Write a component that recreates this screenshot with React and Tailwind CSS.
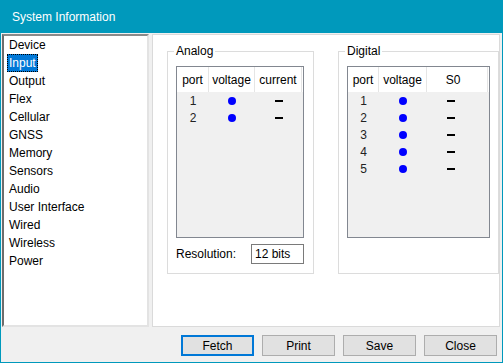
import { useState } from "react";

const navItems = ["Device", "Input", "Output", "Flex", "Cellular", "GNSS", "Memory", "Sensors", "Audio", "User Interface", "Wired", "Wireless", "Power"];

function Dot() {
  return <div className="w-[8px] h-[8px] rounded-full bg-[#0000ff]" />;
}

function Dash() {
  return <div className="w-[8px] h-[2px] bg-black" />;
}

function PortTable({ cols, lastLabel, rows, className }) {
  return (
    <div className={`border border-[#828790] bg-[#f0f0f0] h-[172px] ${className}`}>
      <div className="flex h-[25px] bg-white">
        <div className={`${cols[0]} border-r border-[#e5e5e5] flex items-center justify-center`}>port</div>
        <div className={`${cols[1]} border-r border-[#e5e5e5] flex items-center justify-center`}>voltage</div>
        <div className={`${cols[2]} border-r border-[#e5e5e5] flex items-center justify-center ${lastLabel === "S0" ? "pr-[8px]" : ""}`}>{lastLabel}</div>
      </div>
      {rows.map(n => (
        <div key={n} className="flex h-[17px] items-center">
          <div className={`${cols[0]} flex justify-center text-[#222]`}>{n}</div>
          <div className={`${cols[1]} flex justify-center`}><Dot /></div>
          <div className={`${cols[2]} flex justify-center ${lastLabel === "S0" ? "pr-[14px]" : ""}`}><Dash /></div>
        </div>
      ))}
    </div>
  );
}

export default function App() {
  const [selected, setSelected] = useState("Input");

  return (
    <div className="w-[503px] h-[363px] bg-[#0099bc] flex flex-col font-['Liberation_Sans',Arial,sans-serif] text-[12px] text-black">
      <div className="h-[33px] shrink-0 flex items-center pl-[12px] pt-px text-white">System Information</div>

      <div className="flex-1 mx-px mb-px bg-[#f0f0f0] flex flex-col">
        <div className="flex pt-px h-[294px]">
          {/* nav list */}
          <div className="ml-px w-[147px] h-[293px] bg-white border-2 border-t-[#8a8a8a] border-l-[#6d6d6d] border-r-[#e3e3e3] border-b-[#e3e3e3] pl-[3px]">
            {navItems.map(item => (
              <div key={item} className="h-[18px]">
                <span
                  onClick={() => setSelected(item)}
                  className={`inline-block h-[18px] leading-[19px] px-[2px] ${selected === item ? "bg-[#0078d7] text-white outline-1 outline-dotted outline-black -outline-offset-1" : ""}`}
                >
                  {item}
                </span>
              </div>
            ))}
          </div>

          {/* detail panel */}
          <div className="ml-[3px] w-[348px] h-[293px] bg-white border border-[#dadada] pl-[14px] pt-[9px] flex gap-[24px]">
            <fieldset className="w-[147px] h-[230px] border border-[#dcdcdc] pl-[8px]">
              <legend className="-ml-[2px] px-[2px] leading-[15px]">Analog</legend>
              <PortTable cols={["w-[32px]", "w-[46px]", "w-[47px]"]} lastLabel="current" rows={[1, 2]} className="mt-[7px] w-[128px]" />
              <div className="flex items-center mt-[6px] h-[20px]">
                <span className="w-[75px]">Resolution:</span>
                <div className="w-[53px] h-[20px] border border-[#7a7a7a] bg-white flex items-center pl-[3px]">12 bits</div>
              </div>
            </fieldset>

            <fieldset className="w-[161px] h-[230px] border border-[#dcdcdc] pl-[8px]">
              <legend className="-ml-[2px] px-[2px] leading-[15px]">Digital</legend>
              <PortTable cols={["w-[31px]", "w-[48px]", "w-[61px]"]} lastLabel="S0" rows={[1, 2, 3, 4, 5]} className="mt-[7px] w-[143px]" />
            </fieldset>
          </div>
        </div>

        <div className="flex-1 flex justify-end items-start pt-[8px] pr-[5px] gap-[8px]">
          <button className="w-[73px] h-[21px] bg-[#e1e1e1] border-2 border-[#0078d7]">Fetch</button>
          <button className="w-[73px] h-[21px] bg-[#e1e1e1] border border-[#adadad]">Print</button>
          <button className="w-[73px] h-[21px] bg-[#e1e1e1] border border-[#adadad]">Save</button>
          <button className="w-[73px] h-[21px] bg-[#e1e1e1] border border-[#adadad]">Close</button>
        </div>
      </div>
    </div>
  );
}
